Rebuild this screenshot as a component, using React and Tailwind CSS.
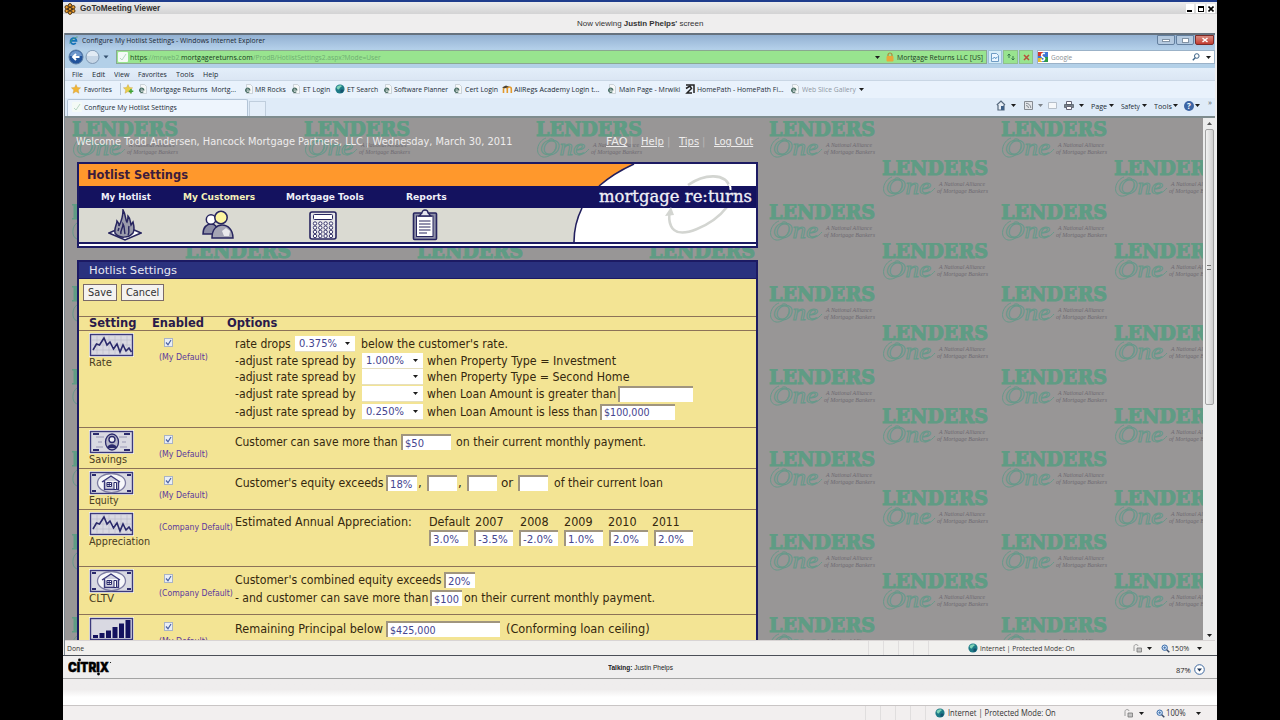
import React, { useLayoutEffect, useRef } from "react";
import clsx from "clsx";

// Stretches or narrows a line of text to the width of its box
function Fit({ className, children }) {
  const ref = useRef(null);

  useLayoutEffect(() => {
    const box = ref.current;
    const text = box.firstChild;
    text.style.transform = `scaleX(${box.clientWidth / text.offsetWidth})`;
  }, [children]);

  return (
    <span ref={ref} className={clsx("block shrink-0 whitespace-nowrap", className)}>
      <span className="inline-block origin-left">{children}</span>
    </span>
  );
}

function Caret({ className }) {
  return (
    <svg viewBox="0 0 5 3" className={clsx("h-[3px] w-[5px] shrink-0", className)}>
      <path d="M0 0h5L2.5 3z" fill="#1c1c1c" />
    </svg>
  );
}

function IeIcon({ className }) {
  return (
    <svg viewBox="0 0 9 10" className={clsx("h-[10px] w-[9px] shrink-0", className)}>
      <path d="M2.5.5h4l2 2v7h-6z" fill="#f6f8f8" stroke="#b4bcc2" strokeWidth=".6" />
      <path d="M1.6 6h4.2A2.1 2.1 0 1 0 5.3 7.6" fill="none" stroke="#43695f" strokeWidth="1.2" />
    </svg>
  );
}

function Globe({ className }) {
  return (
    <svg viewBox="0 0 10 10" className={clsx("h-[10px] w-[10px] shrink-0", className)}>
      <circle cx="5" cy="5" r="4.6" fill="#1d7a86" />
      <path d="M1.5 3.5C3 1 6 .8 7 2c-1 1.500-2 1-2.500 2.500S2.500 6 1.500 3.500z" fill="#7fd3b8" />
      <path d="M5.500 6c2-1 3 0 3.200.6C8 8 7 9 5.500 9z" fill="#17506e" />
    </svg>
  );
}

function PageLeaf({ className }) {
  return (
    <svg viewBox="0 0 10 10" className={clsx("h-[10px] w-[10px] shrink-0", className)}>
      <rect width="10" height="10" rx="1" fill="#f4faf6" />
      <path d="M2 6l2 2 4-6" fill="none" stroke="#b9d6c4" strokeWidth="1" />
    </svg>
  );
}

function Star({ color, plus }) {
  return (
    <svg viewBox="0 0 11 10" className="h-[10px] w-[11px] shrink-0">
      <path d="M5 .5l1.400 3 3.200.3-2.400 2.200.8 3.300L5 7.600 2 9.300l.8-3.300L.4 3.800l3.200-.3z" fill={color} stroke="#c99a3c" strokeWidth=".4" />
      {plus && <path d="M8 5v4.500M5.800 7.200h4.500" stroke="#3fa43a" strokeWidth="1.500" />}
    </svg>
  );
}

function GoToTitle() {
  return (
    <div className="flex h-[12px] items-center bg-linear-to-b from-[#ececec] to-[#d3d3d4] pt-[1px] pl-[1px] font-['Liberation_Sans']">
      <svg viewBox="0 0 12 12" className="h-[12px] w-[12px]">
        <g fill="#f0a02c" stroke="#4f3412" strokeWidth="1">
          <circle cx="6" cy="2.300" r="1.700" />
          <circle cx="9.300" cy="4.200" r="1.700" />
          <circle cx="9.300" cy="7.900" r="1.700" />
          <circle cx="6" cy="9.700" r="1.700" />
          <circle cx="2.700" cy="7.900" r="1.700" />
          <circle cx="2.700" cy="4.200" r="1.700" />
          <circle cx="6" cy="6" r="1.600" />
        </g>
      </svg>
      <Fit className="ml-[4px] w-[80px] text-[8.500px] leading-none font-bold text-[#333]">GoToMeeting Viewer</Fit>
      <div className="ml-auto flex gap-[2px] pr-[2px]">
        <span className="flex h-[9px] w-[8px] items-end bg-white p-[1px]"><i className="h-[2px] w-[5px] bg-black" /></span>
        <span className="flex h-[9px] w-[9px] items-center justify-center bg-white"><i className="h-[6px] w-[6px] border border-t-2 border-black" /></span>
        <span className="flex h-[9px] w-[8px] items-center justify-center bg-white">
          <svg viewBox="0 0 6 6" className="h-[6px] w-[6px]"><path d="M.5.5l5 5m0-5l-5 5" stroke="#000" strokeWidth="1.600" /></svg>
        </span>
      </div>
    </div>
  );
}

function IeTitle() {
  return (
    <div className="flex h-[14px] items-start bg-linear-to-b from-[#93b1d2] to-[#b3cfe9] pl-[4px]">
      <svg viewBox="0 0 9 9" className="mt-[1px] h-[9px] w-[9px]">
        <path d="M1.500 4.800h6A3 3 0 1 0 6.800 7" fill="none" stroke="#1673b8" strokeWidth="1.700" />
        <path d="M.6 7.500C2 4 6 1 8.600 1" fill="none" stroke="#3c9c70" strokeWidth=".8" />
      </svg>
      <Fit className="ml-[4px] w-[183px] text-[8px] leading-[10px] text-[#1b2733]">
        Configure My Hotlist Settings - Windows Internet Explorer
      </Fit>
      <div className="ml-auto flex h-[10px] gap-[1px] pr-[1px]">
        <span className="flex w-[18px] items-center justify-center rounded-b-[2px] border border-[#64809f] bg-[#b4c9df]"><i className="h-[3px] w-[8px] border border-[#8293a5] bg-white" /></span>
        <span className="flex w-[18px] items-center justify-center rounded-b-[2px] border border-[#64809f] bg-[#b4c9df]"><i className="h-[5px] w-[7px] border border-[#8293a5] bg-white" /></span>
        <span className="flex w-[19px] items-center justify-center rounded-b-[2px] border border-[#7c2b27] bg-linear-to-b from-[#d98a80] to-[#c23a30]">
          <svg viewBox="0 0 8 6" className="h-[6px] w-[8px]"><path d="M1.500 1l5 4m0-4l-5 4" stroke="#fff" strokeWidth="1.500" /></svg>
        </span>
      </div>
    </div>
  );
}

function AddressBar() {
  return (
    <div className="flex h-[19px] items-start bg-[#b3d0e8] pl-[3px] text-[8px]">
      <svg viewBox="0 0 48 17" className="h-[17px] w-[48px] shrink-0">
        <circle cx="8" cy="8" r="7" fill="#22549c" stroke="#5d7ea6" />
        <path d="M2 7a6 5 0 0 1 12 0z" fill="#6d96cb" />
        <path d="M11.500 8H5m3-3L5 8l3 3" fill="none" stroke="#fff" strokeWidth="1.900" />
        <circle cx="24.500" cy="8" r="6.500" fill="#c6d6e6" stroke="#8098b2" />
        <path d="M19 7a5.500 5 0 0 1 11 0z" fill="#e2ebf4" />
        <path d="M35.500 6.500h5l-2.500 3z" fill="#34506e" />
      </svg>
      <div className="mt-px flex h-[14px] w-[872px] items-center border border-[#8aa890] bg-[#98e48f] leading-none">
        <PageLeaf className="ml-[1px]" />
        <Fit className="ml-[2px] w-[17px] text-[#1e4a22]">https</Fit>
        <Fit className="w-[34px] text-[#6fae72]">://mrweb2.</Fit>
        <Fit className="w-[72px] text-[#163a1a]">mortgagereturns.com</Fit>
        <Fit className="w-[128px] text-[#6fae72]">/ProdB/HotlistSettings2.aspx?Mode=User</Fit>
        <Caret className="ml-auto" />
        <svg viewBox="0 0 8 10" className="ml-[6px] h-[10px] w-[8px]">
          <path d="M2 5V3a2 2 0 0 1 4 0v2" fill="none" stroke="#a98a3a" strokeWidth="1.200" />
          <rect x=".5" y="4" width="7" height="5.500" rx="1" fill="#e8a83a" />
        </svg>
        <Fit className="mr-[3px] ml-[3px] w-[86px] text-[#1d3d1f]">Mortgage Returns LLC [US]</Fit>
      </div>
      <div className="mt-px ml-px flex h-[14px] gap-[1px]">
        <span className="flex w-[14px] items-center justify-center border border-[#9dc0d8] bg-[#d5ecf8]">
          <svg viewBox="0 0 8 9" className="h-[9px] w-[8px]"><path d="M.5.5h5l2 2v6h-7z" fill="#eaf5ff" stroke="#6f9cc4" /><path d="M1.500 6l2-2 1 1.500L6.500 4" fill="none" stroke="#4d8fc2" /></svg>
        </span>
        <span className="flex w-[15px] items-center justify-center border border-[#8fbf8c] bg-[#98e48f]">
          <svg viewBox="0 0 8 8" className="h-[8px] w-[8px]"><path d="M2 1v4M.5 2.500L2 1l1.500 1.500M6 3v4M4.500 5.500L6 7l1.500-1.500" fill="none" stroke="#37794a" /></svg>
        </span>
        <span className="flex w-[14px] items-center justify-center border border-[#8fbf8c] bg-[#98e48f]">
          <svg viewBox="0 0 7 7" className="h-[7px] w-[7px]"><path d="M1 1l5 5m0-5L1 6" stroke="#b8503a" strokeWidth="1.500" /></svg>
        </span>
      </div>
      <div className="mt-px ml-[4px] flex h-[14px] w-[178px] items-center border border-[#9bb2c8] bg-white leading-none">
        <svg viewBox="0 0 10 10" className="h-[10px] w-[10px]">
          <rect width="10" height="10" fill="#3f74d6" />
          <path d="M0 0h5v4H0z" fill="#d6372c" />
          <path d="M0 6h4v4H0z" fill="#eab92e" />
          <path d="M6 5h4v5H6z" fill="#2f9a49" />
          <path d="M7 1.500C4.500.5 3 2.500 4 4.500c1 1.500 3 .5 2.500 2.500S3.500 9 3 7.500" fill="none" stroke="#fff" strokeWidth="1.600" />
        </svg>
        <Fit className="ml-[3px] w-[21px] text-[#8a8f94]">Google</Fit>
        <svg viewBox="0 0 8 8" className="ml-auto h-[8px] w-[8px]"><circle cx="4.800" cy="3" r="2.300" fill="none" stroke="#3b6287" /><path d="M3.200 4.700L.8 7.300" stroke="#3b6287" strokeWidth="1.300" /></svg>
        <Caret className="mr-[3px] ml-[6px]" />
      </div>
    </div>
  );
}

function MenuBar() {
  return (
    <div className="flex h-[12px] items-center bg-linear-to-b from-[#e3eefa] to-[#dbe6f4] pl-[7px] text-[8px] leading-none text-[#222b36]">
      <Fit className="w-[11px]">File</Fit>
      <Fit className="ml-[9px] w-[13px]">Edit</Fit>
      <Fit className="ml-[9px] w-[15px]">View</Fit>
      <Fit className="ml-[9px] w-[29px]">Favorites</Fit>
      <Fit className="ml-[9px] w-[18px]">Tools</Fit>
      <Fit className="ml-[9px] w-[15px]">Help</Fit>
    </div>
  );
}

function FavoritesBar() {
  return (
    <div className="flex h-[18px] items-center border-t border-[#c9d6e4] bg-[#e9f2fc] pb-[1px] pl-[6px] text-[8px] leading-none text-[#222b36]">
      <Star color="#f2b534" />
      <Fit className="ml-[2px] w-[28px]">Favorites</Fit>
      <i className="ml-[8px] h-[12px] w-px bg-[#b5c4d4]" />
      <span className="ml-[2px]"><Star color="#e9d04a" plus /></span>
      <IeIcon className="ml-[4px]" />
      <Fit className="ml-[3px] w-[86px]">{"Mortgage Returns \u00a0Mortg..."}</Fit>
      <IeIcon className="ml-[8px]" />
      <Fit className="ml-[2px] w-[31px]">MR Rocks</Fit>
      <IeIcon className="ml-[5px]" />
      <Fit className="ml-[3px] w-[27px]">ET Login</Fit>
      <Globe className="ml-[5px]" />
      <Fit className="ml-[2px] w-[31px]">ET Search</Fit>
      <IeIcon className="ml-[5px]" />
      <Fit className="ml-[2px] w-[54px]">Software Planner</Fit>
      <IeIcon className="ml-[5px]" />
      <Fit className="ml-[3px] w-[33px]">Cert Login</Fit>
      <svg viewBox="0 0 11 9" className="ml-[4px] h-[9px] w-[11px] shrink-0">
        <path d="M1.500 8V4a1.800 1.800 0 0 1 3.800 0v4M5.300 8V4a1.900 1.900 0 0 1 4 0v4" fill="none" stroke="#e39a2d" strokeWidth="1.600" />
        <path d="M0 2.500L4 .5l3 1.200-4 1.500z" fill="#4b4437" />
      </svg>
      <Fit className="ml-[1px] w-[85px]">AllRegs Academy Login t...</Fit>
      <IeIcon className="ml-[8px]" />
      <Fit className="ml-[3px] w-[61px]">Main Page - Mrwiki</Fit>
      <svg viewBox="0 0 10 10" className="ml-[5px] h-[10px] w-[10px] shrink-0">
        <path d="M1 1h8v8" fill="none" stroke="#222" strokeWidth="1.500" />
        <path d="M1 4.500l4-2.500 1.500 2.500L2 9h5" fill="none" stroke="#222" strokeWidth="1.500" />
      </svg>
      <Fit className="ml-[2px] w-[87px]">HomePath - HomePath Fi...</Fit>
      <IeIcon className="ml-[6px]" />
      <Fit className="ml-[3px] w-[54px] text-[#8f98a3]">Web Slice Gallery</Fit>
      <Caret className="ml-[3px]" />
    </div>
  );
}

function TabBar() {
  return (
    <div className="flex h-[18px] items-end bg-[#dfebf8] pl-[2px] text-[8px] leading-none text-[#222b36]">
      <div className="flex h-[17px] w-[181px] items-center rounded-t-[2px] border border-b-0 border-[#b3c4d6] bg-[#eef5fd] pb-[3px] pl-[4px]">
        <PageLeaf />
        <Fit className="ml-[2px] w-[93px]">Configure My Hotlist Settings</Fit>
      </div>
      <div className="ml-px h-[15px] w-[17px] border border-b-0 border-[#c0cedd] bg-[#e4eef9]" />
      <div className="ml-auto flex h-[18px] items-center pr-[3px] pb-[3px]">
        <svg viewBox="0 0 10 11" className="h-[11px] w-[10px]"><path d="M.8 5L5 1l4 4M2 5v5h6V5" fill="#e6edf5" stroke="#56687c" strokeWidth="1.200" /><path d="M5 6h3v4H5z" fill="#3e5f86" /></svg>
        <Caret className="ml-[5px]" />
        <svg viewBox="0 0 9 9" className="ml-[8px] h-[9px] w-[9px]"><path d="M.5.5h8v8h-8z" fill="#e3e6ea" stroke="#858b92" /><path d="M2 4.500A2.500 2.500 0 0 1 4.500 7M2 2.300A4.700 4.700 0 0 1 6.800 7" fill="none" stroke="#858b92" /></svg>
        <Caret className="ml-[5px] opacity-50" />
        <svg viewBox="0 0 9 7" className="ml-[5px] h-[7px] w-[9px]"><path d="M.5.5h8v6h-8z" fill="#f6f8fa" stroke="#b7c0ca" /></svg>
        <svg viewBox="0 0 10 9" className="ml-[7px] h-[9px] w-[10px]"><path d="M2.500.5h5v3h-5z" fill="#fff" stroke="#667" /><path d="M.5 3.500h9v3h-9z" fill="#767f88" stroke="#4b535b" strokeWidth=".7" /><path d="M2.500 5.500h5v3h-5z" fill="#fff" stroke="#667" /></svg>
        <Caret className="ml-[5px]" />
        <Fit className="ml-[7px] w-[16px]">Page</Fit>
        <Caret className="ml-[2px]" />
        <Fit className="ml-[7px] w-[19px]">Safety</Fit>
        <Caret className="ml-[2px]" />
        <Fit className="ml-[7px] w-[18px]">Tools</Fit>
        <Caret className="ml-[1px]" />
        <span className="ml-[6px] flex h-[10px] w-[10px] items-center justify-center rounded-full bg-[#3c64a4] text-[8px] font-bold text-white">?</span>
        <Caret className="ml-[1px]" />
        <span className="mb-[7px] ml-[8px] text-[8px] text-[#566]">»</span>
      </div>
    </div>
  );
}

function LendersOne({ className }) {
  return (
    <svg viewBox="0 0 110 40" className={clsx("h-[40px] w-[110px] shrink-0", className)}>
      <text x="0" y="15.300" textLength="106" lengthAdjust="spacingAndGlyphs" fontFamily="DejaVu Serif" fontWeight="bold" fontSize="20.500" fill="#5f9c84" stroke="#5f9c84" strokeWidth="1.100">LENDERS</text>
      <path d="M10 17C1 20-2 34 7 36c9 1 16-10 12-16-2-3-6-3-7 0M45 33c4 0 6-3 8-5" fill="none" stroke="#67998a" />
      <text x="4" y="34" textLength="45" lengthAdjust="spacingAndGlyphs" fontFamily="Liberation Serif" fontStyle="italic" fontSize="24" fill="#989696" stroke="#67998a" strokeWidth="1">One</text>
      <text x="57" y="26" textLength="46" lengthAdjust="spacingAndGlyphs" fontFamily="Liberation Serif" fontStyle="italic" fontSize="6.500" fill="#6e6a71">A National Alliance</text>
      <text x="55" y="32.500" textLength="51" lengthAdjust="spacingAndGlyphs" fontFamily="Liberation Serif" fontStyle="italic" fontSize="6.500" fill="#6e6a71">of Mortgage Bankers</text>
    </svg>
  );
}

// The strip of a logo that sticks out left of the panels
function LogoEdge() {
  return (
    <svg viewBox="0 0 5 40" className="mt-[3px] h-[40px] w-[5px]">
      <path d="M0 0h5v15.500H0v-1.500h1.500v-12.500H0z" fill="#5f9c84" />
      <path d="M5 19C0 22-1 33 5 35" fill="none" stroke="#67998a" />
    </svg>
  );
}

// Watermark behind the page; logos fully under the panels are left out
function Backdrop() {
  return (
    <div className="absolute inset-0 overflow-hidden pl-[7px]">
      {[0, 1, 2, 3, 4, 5, 6].map((row) => (
        <div key={row} className="flex h-[82.600px]">
          {[0, 1, 2, 3, 4].map((col) => (
            <div key={col} className="flex w-[232.200px] shrink-0">
              <div className="w-[113px]">
                {row === 0 || col > 2 ? <LendersOne className="mt-[3px]" /> : col === 0 && <LogoEdge />}
              </div>
              {((row === 1 && col < 3) || col > 2) && <LendersOne className="mt-[42px]" />}
            </div>
          ))}
        </div>
      ))}
    </div>
  );
}

function FireIcon() {
  return (
    <svg viewBox="0 0 34 32" className="h-[32px] w-[34px]">
      <path d="M1 24l9-4h14l9 4-16 7z" fill="#fff" stroke="#27255f" strokeWidth="1.500" />
      <path d="M7 24c-1-6 2-8 2-12 2 2 2 4 2 5 2-4 4-8 4-16 3 5 2 9 4 12 1-2 1-4 1-6 3 3 2 6 3 9l2-3c1 4 2 7 0 11-4 5-14 6-18 0z" fill="#9a9bab" stroke="#27255f" strokeWidth="1.500" />
      <path d="M13 25c-1-4 2-5 2-10 2 3 1 7 2 10m3 1c2-3 0-5 1-9M10 22l1-3" fill="none" stroke="#27255f" strokeWidth="1.400" />
    </svg>
  );
}

function PeopleIcon() {
  return (
    <svg viewBox="0 0 32 30" className="h-[30px] w-[32px]">
      <g stroke="#27255f" strokeWidth="1.500">
        <path d="M1 24c0-7 4-10 8-10 5 0 7 4 7 10z" fill="#8c8da5" />
        <circle cx="9" cy="9.500" r="4.700" fill="#fff" />
        <path d="M10 28c0-9 5-13 10-13 6 0 11 5 11 13z" fill="#a5a5b4" />
        <circle cx="19" cy="7.500" r="6.200" fill="#fdf6a0" />
      </g>
      <path d="M20 21l4-3 4 3-1 5h-5z" fill="#e9e9ec" />
    </svg>
  );
}

function CalculatorIcon() {
  return (
    <svg viewBox="0 0 28 29" className="h-[29px] w-[28px]">
      <rect x="1" y="1" width="26" height="27" rx="2" fill="#e6e6e8" stroke="#27255f" strokeWidth="1.600" />
      <rect x="4.500" y="3.500" width="19" height="5" rx="1" fill="#fff" stroke="#27255f" />
      {[12.500, 16.700, 20.900, 25].map((y) =>
        [6, 11.300, 16.600, 22].map((x) => (
          <circle key={`${x}-${y}`} cx={x} cy={y} r="1.700" fill="#fff" stroke="#27255f" strokeWidth=".9" />
        ))
      )}
    </svg>
  );
}

function ClipboardIcon() {
  return (
    <svg viewBox="0 0 26 32" className="h-[32px] w-[26px]">
      <rect x="1.500" y="4" width="23" height="26.500" rx="1" fill="#8f90a8" stroke="#27255f" strokeWidth="1.600" />
      <rect x="4.500" y="7" width="16.500" height="20.500" fill="#fff" stroke="#27255f" />
      <path d="M7 7l3-3c0-4 6-4 6 0l3 3z" fill="#e6e6ee" stroke="#27255f" strokeWidth="1.300" />
      <path d="M7 12h11.500M7 15h11.500M7 18h11.500M7 21h11.500M7 24h8" stroke="#27255f" strokeWidth="1.200" />
    </svg>
  );
}

function HeaderArt() {
  return (
    <svg viewBox="0 0 183 78" className="absolute top-0 right-0 h-[78px] w-[183px]">
      <path d="M61 0Q41 9 26 22H183V0z" fill="#fff" />
      <path d="M9 44Q1 60 1 78H183V44z" fill="#fff" />
      <path d="M61 0Q41 9 26 22M9 44Q1 60 1 78" fill="none" stroke="#221f5e" strokeWidth="1.600" />
      <path d="M115 21C131 10 153 8 157 24" fill="none" stroke="#d3d5d1" strokeWidth="2.600" />
      <path d="M154 43C140 61 105 78 98 62Q95 55 97 48" fill="none" stroke="#d3d5d1" strokeWidth="2.600" />
      <rect y="22" width="183" height="22" fill="#14125f" />
      <path d="M156 20q2 3 1.500 6" stroke="#fff" strokeWidth="2" />
      <path d="M92 52l6-9 3 8z" fill="#d3d5d1" />
      <text x="26" y="38" textLength="153" lengthAdjust="spacingAndGlyphs" fontFamily="DejaVu Serif" fontSize="16.500" fill="#f0f0f6" stroke="#f0f0f6" strokeWidth=".3">mortgage re:turns</text>
    </svg>
  );
}

function SiteHeader() {
  return (
    <div className="relative mt-[12px] h-[86px] w-[681px] border-2 border-[#1c1a63] bg-white">
      <div className="flex h-[22px] items-center bg-[#ff982c] pl-[8px]">
        <Fit className="w-[101px] text-[12px] leading-none font-bold text-[#3d1c3c]">Hotlist Settings</Fit>
      </div>
      <div className="flex h-[22px] items-center bg-[#14125f] pl-[22px] text-[9px] leading-none font-bold text-[#efeff8]">
        <Fit className="w-[50px]">My Hotlist</Fit>
        <Fit className="ml-[32px] w-[72px] text-[#f3f0b8]">My Customers</Fit>
        <Fit className="ml-[31px] w-[78px]">Mortgage Tools</Fit>
        <Fit className="ml-[42px] w-[41px]">Reports</Fit>
      </div>
      <div className="flex h-[34px] items-center bg-[#dadad2] pl-[29px]">
        <FireIcon />
        <span className="ml-[60px]"><PeopleIcon /></span>
        <span className="ml-[75px]"><CalculatorIcon /></span>
        <span className="ml-[75px]"><ClipboardIcon /></span>
      </div>
      <div className="h-[2px] bg-[#1c1a63]" />
      <HeaderArt />
    </div>
  );
}

function Picture({ children }) {
  return (
    <svg viewBox="0 0 45 24" className="h-[24px] w-[45px]">
      <rect width="45" height="24" fill="#fbf9ee" />
      <rect x="1.500" y="1.500" width="42" height="21" fill="#d9d9e2" stroke="#3b397c" strokeWidth="1.400" />
      {children}
    </svg>
  );
}

function RateChart() {
  return (
    <Picture>
      <path d="M2 7h41M2 12h41M2 17h41M8 2v20M14 2v20M20 2v20M26 2v20M32 2v20M38 2v20" stroke="#b9b9c9" strokeWidth=".6" />
      <path d="M4 17l3.500-6 3 1 4.500-7 3 7 3-3 3.500 7 3.500-5 3 8 3-7 3 6 3-3 2.500 4" fill="none" stroke="#2b2a6c" strokeWidth="1.600" />
    </Picture>
  );
}

function Banknote() {
  return (
    <Picture>
      <path d="M4 4h6M4 20h6M35 4h6M35 20h6" stroke="#2b2a6c" strokeWidth="2" />
      <path d="M7 7h8M30 7h8M7 17h7M31 17h7M9 12h4M33 12h4" stroke="#9897b4" />
      <ellipse cx="23" cy="12" rx="6.500" ry="8" fill="#b9b9cc" stroke="#2b2a6c" strokeWidth="1.300" />
      <circle cx="23" cy="9.500" r="3" fill="#f0f0f4" stroke="#2b2a6c" strokeWidth="1.400" />
      <path d="M18 18c1-5 9-5 10 0z" fill="#2b2a6c" />
    </Picture>
  );
}

function HouseNote() {
  return (
    <Picture>
      <path d="M3 4h4M3 20h4M38 4h4M38 20h4" stroke="#2b2a6c" strokeWidth="2.200" />
      <ellipse cx="22.500" cy="12" rx="14" ry="9.500" fill="#f7f7fa" stroke="#7d7ca2" strokeWidth="1.300" />
      <path d="M13 11l9-6 9 6M15.500 10v8.500h14V10" fill="#d0d0de" stroke="#3b397c" strokeWidth="1.400" />
      <path d="M18 11.500h4.500v4H18zM25 11.500h2.500v7H25zM20.200 11.500v4M18 13.500h4.500" fill="#fff" stroke="#2b2a6c" />
    </Picture>
  );
}

function Bars() {
  return (
    <Picture>
      <path d="M4 18h5v3H4zM10.500 16h5v5h-5zM17 13.500h5v7.500h-5zM23.500 10h5v11h-5zM30 6.500h5V21h-5zM36.500 3h5v18h-5z" fill="#14125f" />
    </Picture>
  );
}

function Row({ picture, label, labelClass, checked, scope, scopeClass, className, children }) {
  return (
    <div className={clsx("grid grid-cols-[79px_77px_1fr] border-b border-[#8c7258]", className)}>
      <div className="pt-[2px] pl-[10px] text-[10px] leading-[12px] text-[#4a3d22]">
        {picture}
        {label && <Fit className={labelClass}>{label}</Fit>}
      </div>
      <div className="pl-[1px] text-[8.500px] leading-[10px] text-[#5b3a9c]">
        {checked ? (
          <span className="mt-[7px] mb-[5px] ml-[5px] flex h-[9px] w-[9px] items-center justify-center border border-[#a9b3c6] bg-[#e9eef6]">
            <svg viewBox="0 0 7 7" className="h-[7px] w-[7px]"><path d="M1 3.500L3 5.700 6 1" fill="none" stroke="#4a62a4" strokeWidth="1.200" /></svg>
          </span>
        ) : (
          <div className="h-[12px]" />
        )}
        <Fit className={scopeClass}>{scope}</Fit>
      </div>
      <div className="text-[12px] leading-none text-[#35280e]">{children}</div>
    </div>
  );
}

function Field({ className, fit, children }) {
  return (
    <span className={clsx("flex h-[16px] shrink-0 items-center border-t-2 border-l-2 border-[#a0957f] bg-white pl-[2px] text-[11px] text-[#45458f]", className)}>
      {children && <Fit className={fit}>{children}</Fit>}
    </span>
  );
}

function Select({ className, children }) {
  return (
    <span className={clsx("flex h-[16px] shrink-0 items-center border-b border-[#e6dfbe] bg-white pl-[4px] text-[11px] text-[#45458f]", className)}>
      {children && <Fit className="w-[38px]">{children}</Fit>}
      <Caret className="mr-[5px] ml-auto" />
    </span>
  );
}

const rates = ["3.0%", "-3.5%", "-2.0%", "1.0%", "2.0%", "2.0%"];

function SettingsPanel() {
  return (
    <div className="relative mt-[12px] h-[400px] w-[681px] border-2 border-[#1c1a63] bg-[#f3e494]">
      <div className="flex h-[17px] items-center border-b border-[#1c1a63] bg-[#2a317e] pl-[10px]">
        <Fit className="w-[88px] text-[11px] leading-none text-[#e7e8f2]">Hotlist Settings</Fit>
      </div>
      <div className="flex h-[37px] gap-[4px] pt-[5px] pl-[4px] text-[11px] leading-none text-[#333]">
        <span className="flex h-[17px] w-[34px] items-center border border-[#7a6a68] bg-[#f4f2f0] pl-[4px]"><Fit className="w-[24px]">Save</Fit></span>
        <span className="flex h-[17px] w-[43px] items-center border border-[#7a6a68] bg-[#f4f2f0] pl-[4px]"><Fit className="w-[33px]">Cancel</Fit></span>
      </div>
      <div className="flex h-[15px] items-center border-y border-[#8c7258] pl-[10px] text-[11.500px] leading-none font-bold text-[#2a1a4a]">
        <Fit className="w-[47px]">Setting</Fit>
        <Fit className="ml-[16px] w-[52px]">Enabled</Fit>
        <Fit className="ml-[23px] w-[50px]">Options</Fit>
      </div>

      <Row className="h-[97px]" picture={<RateChart />} label="Rate" labelClass="w-[23px]" checked scope="(My Default)" scopeClass="w-[49px]">
        <div className="mt-[5px] flex h-[16px] items-center">
          <Fit className="w-[56px]">rate drops</Fit>
          <Select className="ml-[4px] w-[60px]">0.375%</Select>
          <Fit className="ml-[6px] w-[147px]">below the customer's rate.</Fit>
        </div>
        <div className="flex h-[17px] items-center">
          <Fit className="w-[121px]">-adjust rate spread by</Fit>
          <Select className="ml-[6px] w-[61px]">1.000%</Select>
          <Fit className="ml-[4px] w-[189px]">when Property Type = Investment</Fit>
        </div>
        <div className="flex h-[16px] items-center">
          <Fit className="w-[121px]">-adjust rate spread by</Fit>
          <Select className="ml-[6px] w-[61px]" />
          <Fit className="ml-[4px] w-[202px]">when Property Type = Second Home</Fit>
        </div>
        <div className="flex h-[17px] items-center">
          <Fit className="w-[121px]">-adjust rate spread by</Fit>
          <Select className="ml-[6px] w-[61px]" />
          <Fit className="ml-[4px] w-[189px]">when Loan Amount is greater than</Fit>
          <Field className="ml-[2px] w-[75px]" />
        </div>
        <div className="flex h-[19px] items-center">
          <Fit className="w-[121px]">-adjust rate spread by</Fit>
          <Select className="ml-[6px] w-[61px]">0.250%</Select>
          <Fit className="ml-[4px] w-[171px]">when Loan Amount is less than</Fit>
          <Field className="ml-[2px] w-[75px]" fit="w-[46px]">$100,000</Field>
        </div>
      </Row>

      <Row className="h-[41px]" picture={<Banknote />} label="Savings" labelClass="w-[38px]" checked scope="(My Default)" scopeClass="w-[49px]">
        <div className="mt-[6px] flex h-[16px] items-center">
          <Fit className="w-[163px]">Customer can save more than</Fit>
          <Field className="ml-[3px] w-[50px]" fit="w-[19px]">$50</Field>
          <Fit className="ml-[5px] w-[190px]">on their current monthly payment.</Fit>
        </div>
      </Row>

      <Row className="h-[41px]" picture={<HouseNote />} label="Equity" labelClass="w-[30px]" checked scope="(My Default)" scopeClass="w-[49px]">
        <div className="mt-[6px] flex h-[16px] items-center">
          <Fit className="w-[149px]">Customer's equity exceeds</Fit>
          <Field className="ml-[2px] w-[31px]" fit="w-[22px]">18%</Field>
          <span className="w-[10px] pl-[1px]">,</span>
          <Field className="w-[30px]" />
          <span className="w-[10px] pl-[1px]">,</span>
          <Field className="w-[30px]" />
          <Fit className="ml-[4px] w-[12px]">or</Fit>
          <Field className="ml-[5px] w-[30px]" />
          <Fit className="ml-[6px] w-[109px]">of their current loan</Fit>
        </div>
      </Row>

      <Row className="h-[57px]" picture={<RateChart />} label="Appreciation" labelClass="w-[61px]" scope="(Company Default)" scopeClass="w-[74px]">
        <div className="mt-[6px] flex">
          <Fit className="w-[177px]">Estimated Annual Appreciation:</Fit>
          <div className="ml-[17px]">
            <div className="flex">
              <Fit className="w-[41px]">Default</Fit>
              <Fit className="ml-[5px] w-[29px]">2007</Fit>
              <Fit className="ml-[16px] w-[29px]">2008</Fit>
              <Fit className="ml-[15px] w-[29px]">2009</Fit>
              <Fit className="ml-[15px] w-[29px]">2010</Fit>
              <Fit className="ml-[15px] w-[28px]">2011</Fit>
            </div>
            <div className="mt-[2px] flex gap-[6px]">
              {rates.map((rate, i) => (
                <Field key={i} className="w-[39px]" fit={rate.length > 4 ? "w-[30px]" : "w-[26px]"}>{rate}</Field>
              ))}
            </div>
          </div>
        </div>
      </Row>

      <Row className="h-[48px]" picture={<HouseNote />} label="CLTV" labelClass="w-[25px]" checked scope="(Company Default)" scopeClass="w-[74px]">
        <div className="mt-[5px] flex h-[16px] items-center">
          <Fit className="w-[207px]">Customer's combined equity exceeds</Fit>
          <Field className="ml-[2px] w-[31px]" fit="w-[22px]">20%</Field>
        </div>
        <div className="mt-[2px] flex h-[16px] items-center">
          <Fit className="w-[193px]">- and customer can save more than</Fit>
          <Field className="ml-[2px] w-[32px]" fit="w-[25px]">$100</Field>
          <Fit className="ml-[2px] w-[191px]">on their current monthly payment.</Fit>
        </div>
      </Row>

      <Row className="h-[48px]" picture={<Bars />} checked scope="(My Default)" scopeClass="w-[49px]">
        <div className="mt-[6px] flex h-[16px] items-center">
          <Fit className="w-[148px]">Remaining Principal below</Fit>
          <Field className="ml-[3px] w-[114px]" fit="w-[46px]">$425,000</Field>
          <Fit className="ml-[6px] w-[144px]">(Conforming loan ceiling)</Fit>
        </div>
      </Row>
    </div>
  );
}

function WebPage() {
  return (
    <div className="flex h-[524px] border-t-2 border-[#7f8c8e] bg-[#989696]">
      <div className="relative h-full min-w-0 flex-1 overflow-hidden font-['DejaVu_Sans']">
        <Backdrop />
        <div className="relative pl-[12px]">
          <div className="flex h-[32px] items-end pb-[1px] text-[10px] text-[#eeecec]">
            <Fit className="ml-[-1px] w-[436px]">Welcome Todd Andersen, Hancock Mortgage Partners, LLC | Wednesday, March 30, 2011</Fit>
            <Fit className="ml-[94px] w-[21px]"><u>FAQ</u></Fit>
            <span className="w-[14px] pl-[3px] text-[#b9b7b7]">|</span>
            <Fit className="w-[23px]"><u>Help</u></Fit>
            <span className="w-[15px] pl-[3px] text-[#b9b7b7]">|</span>
            <Fit className="w-[20px]"><u>Tips</u></Fit>
            <span className="w-[15px] pl-[3px] text-[#b9b7b7]">|</span>
            <Fit className="w-[39px]"><u>Log Out</u></Fit>
          </div>
          <SiteHeader />
          <SettingsPanel />
        </div>
      </div>
      <div className="flex w-[12px] flex-col items-center bg-[#ececec]">
        <svg viewBox="0 0 5 3" className="mt-[4px] h-[3px] w-[5px]"><path d="M0 3h5L2.500 0z" fill="#555" /></svg>
        <div className="mt-[4px] flex h-[276px] w-[9px] items-center justify-center rounded-[2px] border border-[#a3a3a3] bg-linear-to-r from-[#f2f2f2] to-[#cfcfcf]">
          <i className="h-[5px] w-[4px] border-y border-[#777]" />
        </div>
        <Caret className="mt-auto mb-[3px]" />
      </div>
    </div>
  );
}

function ZoneIcon({ className }) {
  return (
    <svg viewBox="0 0 9 10" className={clsx("h-[10px] w-[9px] shrink-0", className)}>
      <path d="M1 8V3.500C1 1 5 1 5 3" fill="none" stroke="#9a9a9a" />
      <path d="M4 5h4.500v4H4z" fill="#c4c4c4" stroke="#777" strokeWidth=".8" />
    </svg>
  );
}

function ZoomIcon({ className }) {
  return (
    <svg viewBox="0 0 9 9" className={clsx("h-[9px] w-[9px] shrink-0", className)}>
      <circle cx="3.700" cy="3.700" r="2.700" fill="#dbe9f8" stroke="#3568a8" />
      <path d="M3.700 2.300v2.800M2.300 3.700h2.800" stroke="#3568a8" strokeWidth=".8" />
      <path d="M5.700 5.700L8.300 8.300" stroke="#3a4a66" strokeWidth="1.500" />
    </svg>
  );
}

function Dividers() {
  return (
    <div className="flex h-full gap-[14px]">
      {[0, 1, 2, 3, 4].map((i) => (
        <i key={i} className="h-full w-px bg-[#e0dede]" />
      ))}
    </div>
  );
}

export default function App() {
  return (
    <div className="flex h-[720px] w-[1280px] justify-center overflow-hidden bg-black font-['Open_Sans']">
      <div className="flex w-[1154px] flex-col bg-[#efeeee]">
        <div className="h-[2px] bg-[#1f3d8c]" />
        <GoToTitle />
        <div className="flex h-[19px] items-center pt-[1px] pl-[514px] font-['Liberation_Sans'] text-[8px] leading-none text-[#333]">
          <Fit className="w-[126px]">Now viewing <b>Justin Phelps'</b> screen</Fit>
        </div>
        <div className="mr-[2px] ml-[1px] border-l border-[#7d8890]">
          <div className="h-[2px] bg-[#66727e]" />
          <IeTitle />
          <AddressBar />
          <MenuBar />
          <FavoritesBar />
          <TabBar />
          <WebPage />
          <div className="flex h-[15px] items-center border-t border-[#d8d4d4] bg-[#f1f0ee] pl-[2px] text-[8px] leading-none text-[#333]">
            <Fit className="w-[17px]">Done</Fit>
            <span className="ml-[784px] h-full"><Dividers /></span>
            <Globe className="ml-[39px]" />
            <Fit className="ml-[2px] w-[95px]">Internet | Protected Mode: On</Fit>
            <ZoneIcon className="ml-[58px]" />
            <Caret className="ml-[5px]" />
            <ZoomIcon className="ml-[9px]" />
            <Fit className="ml-[1px] w-[18px]">150%</Fit>
            <Caret className="ml-[8px]" />
          </div>
        </div>
        <div className="flex h-[24px] items-center border-t border-b border-t-[#4b4f57] border-b-[#a3a3a3] font-['Liberation_Sans'] text-[#222]">
          <svg viewBox="0 0 46 18" className="ml-[5px] h-[18px] w-[46px]">
            <text x="0" y="13.500" textLength="41" lengthAdjust="spacingAndGlyphs" fontFamily="Inter" fontWeight="900" fontSize="12.500" fill="#000" stroke="#000" strokeWidth=".4">CITRIX</text>
            <circle cx="11.500" cy="2" r="1.400" />
            <circle cx="30.500" cy="16" r="1.400" />
            <circle cx="42.500" cy="4.500" r=".6" />
          </svg>
          <Fit className="ml-[494px] w-[65px] text-[7px] leading-none"><b>Talking:</b> Justin Phelps</Fit>
          <Fit className="mt-[5px] ml-auto w-[15px] font-['Open_Sans'] text-[8px] leading-none">87%</Fit>
          <svg viewBox="0 0 11 11" className="mt-[5px] mr-[12px] ml-[3px] h-[11px] w-[11px]">
            <circle cx="5.500" cy="5.500" r="4.800" fill="#fff" stroke="#3e69a0" />
            <path d="M3 4.500h5l-2.500 3z" fill="#1c3355" />
          </svg>
        </div>
        <div className="h-[26px] bg-linear-to-b from-[#efeded] from-40% to-white to-70%" />
        <div className="flex h-[15px] items-center border-t border-[#c9c5c5] bg-[#f2efef] text-[8.500px] leading-none text-[#333]">
          <span className="ml-[802px] h-full"><Dividers /></span>
          <Globe className="ml-[9px]" />
          <Fit className="ml-[3px] w-[108px]">Internet | Protected Mode: On</Fit>
          <ZoneIcon className="ml-[68px]" />
          <Caret className="ml-[6px]" />
          <ZoomIcon className="ml-[12px]" />
          <Fit className="ml-[1px] w-[20px]">100%</Fit>
          <Caret className="ml-[10px]" />
        </div>
      </div>
    </div>
  );
}
